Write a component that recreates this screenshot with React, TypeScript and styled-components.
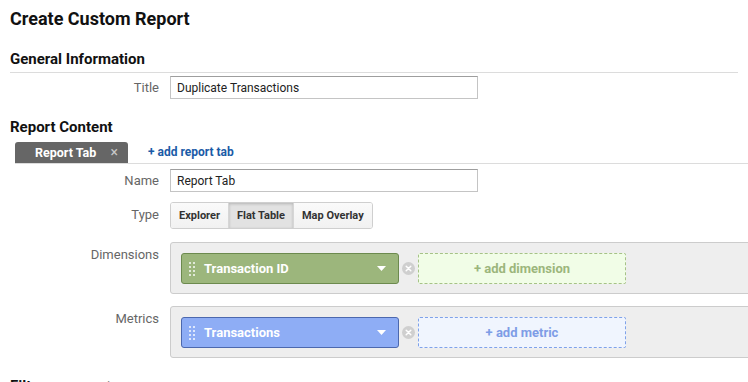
import React from "react";
import styled, { createGlobalStyle } from "styled-components";

const GlobalStyle = createGlobalStyle`
  html, body {
    margin: 0;
    padding: 0;
    background: #fff;
    overflow: hidden;
  }
  body {
    font-family: Roboto, "Liberation Sans", Arial, sans-serif;
    color: #222;
  }
`;

type Tone = "green" | "blue";

const tones = {
  green: {
    bg: "#9cb67c",
    border: "#6c8a4e",
    addBg: "#f1fde7",
    addBorder: "#a6c287",
    addText: "#9cb67c",
  },
  blue: {
    bg: "#8eadf5",
    border: "#4c68ae",
    addBg: "#f0f5fe",
    addBorder: "#7fa2ea",
    addText: "#7e9de6",
  },
};

export default function App() {
  return (
    <>
      <GlobalStyle />
      <Page>
        <PageTitle>Create Custom Report</PageTitle>

        <SectionTitle $ruled>General Information</SectionTitle>
        <FormRow $top={3}>
          <Label $offset={4}>Title</Label>
          <TextInput defaultValue="Duplicate Transactions" />
        </FormRow>

        <SectionTitle $space={19}>Report Content</SectionTitle>
        <TabBar>
          <Tab>
            Report Tab <TabClose>×</TabClose>
          </Tab>
          <AddLink>+ add report tab</AddLink>
        </TabBar>

        <FormRow $top={5}>
          <Label $offset={4}>Name</Label>
          <TextInput defaultValue="Report Tab" />
        </FormRow>

        <FormRow $top={10}>
          <Label $offset={5}>Type</Label>
          <ButtonGroup>
            <TypeButton>Explorer</TypeButton>
            <TypeButton $active>Flat Table</TypeButton>
            <TypeButton>Map Overlay</TypeButton>
          </ButtonGroup>
        </FormRow>

        <FormRow $top={13}>
          <Label $offset={5}>Dimensions</Label>
          <Panel>
            <Chip $tone="green">
              <Handle />
              <ChipText>Transaction ID</ChipText>
              <Caret />
            </Chip>
            <RemoveIcon />
            <AddBox $tone="green">+ add dimension</AddBox>
          </Panel>
        </FormRow>

        <FormRow $top={12}>
          <Label $offset={5}>Metrics</Label>
          <Panel>
            <Chip $tone="blue">
              <Handle />
              <ChipText>Transactions</ChipText>
              <Caret />
            </Chip>
            <RemoveIcon />
            <AddBox $tone="blue">+ add metric</AddBox>
          </Panel>
        </FormRow>

        <SectionTitle $space={19}>
          Filters <Optional>- optional</Optional>
        </SectionTitle>
      </Page>
    </>
  );
}

function Handle() {
  return (
    <HandleSvg width="6" height="14" viewBox="0 0 6 14">
      {[0, 1, 2, 3].map((r) =>
        [0, 1].map((c) => (
          <rect
            key={`${r}-${c}`}
            x={c * 4}
            y={r * 4}
            width="2"
            height="2"
            fill="rgba(255,255,255,0.7)"
          />
        ))
      )}
    </HandleSvg>
  );
}

function Caret() {
  return (
    <CaretSvg width="9" height="5" viewBox="0 0 9 5">
      <path d="M0 0h9L4.5 5z" fill="#fff" />
    </CaretSvg>
  );
}

function RemoveIcon() {
  return (
    <RemoveSvg width="13" height="13" viewBox="0 0 13 13">
      <circle cx="6.5" cy="6.5" r="6.5" fill="#cfcfcf" />
      <path
        d="M4.2 4.2l4.6 4.6M8.8 4.2l-4.6 4.6"
        stroke="#fff"
        strokeWidth="1.5"
        strokeLinecap="round"
      />
    </RemoveSvg>
  );
}

const Page = styled.div`
  padding: 8px 10px 0 10px;
`;

const PageTitle = styled.h1`
  margin: 0;
  font-size: 18px;
  line-height: 22px;
  font-weight: 700;
  color: #111;
`;

const SectionTitle = styled.h2<{ $ruled?: boolean; $space?: number }>`
  margin: ${(p) => (p.$space ?? 20)}px 0 0 0;
  padding-bottom: ${(p) => (p.$ruled ? "4px" : "0")};
  font-size: 15px;
  line-height: 18px;
  font-weight: 700;
  color: #111;
  border-bottom: ${(p) => (p.$ruled ? "1px solid #dcdcdc" : "none")};
`;

const Optional = styled.span`
  font-weight: 400;
  color: #888;
  font-size: 13px;
`;

const FormRow = styled.div<{ $top?: number }>`
  display: grid;
  grid-template-columns: 160px 1fr;
  align-items: start;
  margin-top: ${(p) => p.$top ?? 0}px;
`;

const Label = styled.div<{ $offset?: number }>`
  text-align: right;
  padding-right: 11px;
  padding-top: ${(p) => p.$offset ?? 3}px;
  font-size: 13px;
  line-height: 16px;
  color: #666;
`;

const TextInput = styled.input`
  box-sizing: border-box;
  width: 308px;
  height: 23px;
  padding: 0 6px;
  border: 1px solid #c4c4c4;
  border-top-color: #9e9e9e;
  border-radius: 0;
  font-family: Roboto, "Liberation Sans", Arial, sans-serif;
  font-size: 12px;
  color: #222;
  outline: none;
`;

const TabBar = styled.div`
  display: flex;
  align-items: flex-end;
  margin: 6px 0 0 5px;
  margin-right: -10px;
  border-bottom: 1px solid #dcdcdc;
  height: 21px;
`;

const Tab = styled.div`
  box-sizing: border-box;
  width: 113px;
  height: 21px;
  background: #666;
  border-radius: 3px 3px 0 0;
  color: #fff;
  font-size: 12.5px;
  font-weight: 700;
  line-height: 21px;
  padding-left: 20px;
`;

const TabClose = styled.span`
  margin-left: 11px;
  color: #c8c8c8;
  font-size: 14px;
  font-weight: 400;
`;

const AddLink = styled.a`
  margin-left: 20px;
  color: #1b5ba7;
  font-size: 12px;
  font-weight: 700;
  line-height: 21px;
  cursor: pointer;
`;

const ButtonGroup = styled.div`
  display: inline-flex;
  justify-self: start;
  border: 1px solid #cfcfcf;
  border-radius: 3px;
  overflow: hidden;
`;

const TypeButton = styled.button<{ $active?: boolean }>`
  height: 25px;
  padding: 0 8px;
  border: none;
  border-left: 1px solid #d6d6d6;
  background: ${(p) =>
    p.$active ? "#e2e2e2" : "linear-gradient(#fafafa, #f1f1f1)"};
  box-shadow: ${(p) => (p.$active ? "inset 0 1px 3px rgba(0,0,0,0.2)" : "none")};
  font-family: Roboto, "Liberation Sans", Arial, sans-serif;
  font-size: 11px;
  font-weight: 700;
  color: #333;
  &:first-child {
    border-left: none;
  }
`;

const Panel = styled.div`
  display: flex;
  align-items: center;
  margin-right: -20px;
  padding: 10px 10px 9px 10px;
  background: #eeeeee;
  border: 1px solid #cccccc;
  border-radius: 3px 0 0 3px;
`;

const Chip = styled.div<{ $tone: Tone }>`
  box-sizing: border-box;
  display: flex;
  align-items: center;
  width: 218px;
  height: 31px;
  padding: 0 12px 0 7px;
  background: ${(p) => tones[p.$tone].bg};
  border: 1px solid ${(p) => tones[p.$tone].border};
  border-radius: 3px;
`;

const HandleSvg = styled.svg`
  flex: none;
`;

const ChipText = styled.span`
  flex: 1;
  margin-left: 9px;
  color: #fff;
  font-size: 13px;
  font-weight: 700;
`;

const CaretSvg = styled.svg`
  flex: none;
`;

const RemoveSvg = styled.svg`
  flex: none;
  margin: 0 3px 0 3px;
`;

const AddBox = styled.div<{ $tone: Tone }>`
  box-sizing: border-box;
  display: flex;
  align-items: center;
  justify-content: center;
  width: 208px;
  height: 31px;
  background: ${(p) => tones[p.$tone].addBg};
  border: 1px dashed ${(p) => tones[p.$tone].addBorder};
  border-radius: 2px;
  color: ${(p) => tones[p.$tone].addText};
  font-size: 13px;
  font-weight: 700;
`;
